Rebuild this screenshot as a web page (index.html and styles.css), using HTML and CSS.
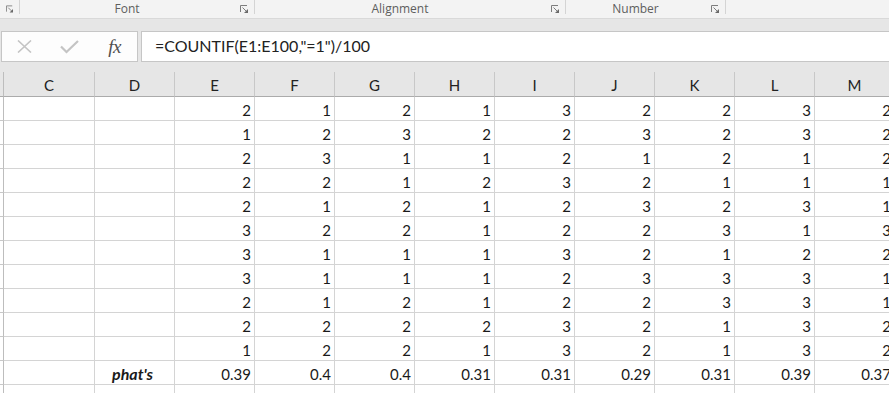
FILE: index.html
```html
<!DOCTYPE html>
<html>
<head>
<meta charset="utf-8">
<link rel="stylesheet" href="styles.css">
</head>
<body>
<div class="ribbon">
  <div class="grp grp0"><span class="glabel"></span><svg class="launch" width="8" height="8" viewBox="0 0 8 8"><path d="M0.5 7V0.5H7" stroke="#7d7d7d" fill="none"/><path d="M2.5 2.5L6 6" stroke="#7d7d7d"/><path d="M8 4V8H4Z" fill="#6a6a6a"/></svg><span class="sep"></span></div>
  <div class="grp g-font"><span class="glabel">Font</span><svg class="launch" width="8" height="8" viewBox="0 0 8 8"><path d="M0.5 7V0.5H7" stroke="#7d7d7d" fill="none"/><path d="M2.5 2.5L6 6" stroke="#7d7d7d"/><path d="M8 4V8H4Z" fill="#6a6a6a"/></svg><span class="sep"></span></div>
  <div class="grp g-align"><span class="glabel">Alignment</span><svg class="launch" width="8" height="8" viewBox="0 0 8 8"><path d="M0.5 7V0.5H7" stroke="#7d7d7d" fill="none"/><path d="M2.5 2.5L6 6" stroke="#7d7d7d"/><path d="M8 4V8H4Z" fill="#6a6a6a"/></svg><span class="sep"></span></div>
  <div class="grp g-num"><span class="glabel">Number</span><svg class="launch" width="8" height="8" viewBox="0 0 8 8"><path d="M0.5 7V0.5H7" stroke="#7d7d7d" fill="none"/><path d="M2.5 2.5L6 6" stroke="#7d7d7d"/><path d="M8 4V8H4Z" fill="#6a6a6a"/></svg><span class="sep"></span></div>
</div>
<div class="band"></div>
<div class="fbar">
  <div class="fxbox">
    <span class="ico"><svg width="15" height="13" viewBox="0 0 15 13"><path d="M1 0.5L14 12.5M14 0.5L1 12.5" stroke="#c4c4c4" stroke-width="1.6" fill="none"/></svg></span>
    <span class="ico"><svg width="19" height="14" viewBox="0 0 19 14"><path d="M1 6.5L6.5 12L18 1" stroke="#c4c4c4" stroke-width="2.2" fill="none"/></svg></span>
    <span class="ico fx">fx</span>
  </div>
  <div class="formula">=COUNTIF(E1:E100,"=1")/100</div>
</div>
<div class="gap"></div>
<div class="sheet">
  <div class="hd rh"></div><div class="hd">C</div><div class="hd">D</div><div class="hd">E</div><div class="hd">F</div><div class="hd">G</div><div class="hd">H</div><div class="hd">I</div><div class="hd">J</div><div class="hd">K</div><div class="hd">L</div><div class="hd">M</div>

  <div class="c rh"></div><div class="c"></div><div class="c"></div><div class="c">2</div><div class="c">1</div><div class="c">2</div><div class="c">1</div><div class="c">3</div><div class="c">2</div><div class="c">2</div><div class="c">3</div><div class="c">2</div>
  <div class="c rh"></div><div class="c"></div><div class="c"></div><div class="c">1</div><div class="c">2</div><div class="c">3</div><div class="c">2</div><div class="c">2</div><div class="c">3</div><div class="c">2</div><div class="c">3</div><div class="c">2</div>
  <div class="c rh"></div><div class="c"></div><div class="c"></div><div class="c">2</div><div class="c">3</div><div class="c">1</div><div class="c">1</div><div class="c">2</div><div class="c">1</div><div class="c">2</div><div class="c">1</div><div class="c">2</div>
  <div class="c rh"></div><div class="c"></div><div class="c"></div><div class="c">2</div><div class="c">2</div><div class="c">1</div><div class="c">2</div><div class="c">3</div><div class="c">2</div><div class="c">1</div><div class="c">1</div><div class="c">1</div>
  <div class="c rh"></div><div class="c"></div><div class="c"></div><div class="c">2</div><div class="c">1</div><div class="c">2</div><div class="c">1</div><div class="c">2</div><div class="c">3</div><div class="c">2</div><div class="c">3</div><div class="c">1</div>
  <div class="c rh"></div><div class="c"></div><div class="c"></div><div class="c">3</div><div class="c">2</div><div class="c">2</div><div class="c">1</div><div class="c">2</div><div class="c">2</div><div class="c">3</div><div class="c">1</div><div class="c">3</div>
  <div class="c rh"></div><div class="c"></div><div class="c"></div><div class="c">3</div><div class="c">1</div><div class="c">1</div><div class="c">1</div><div class="c">3</div><div class="c">2</div><div class="c">1</div><div class="c">2</div><div class="c">2</div>
  <div class="c rh"></div><div class="c"></div><div class="c"></div><div class="c">3</div><div class="c">1</div><div class="c">1</div><div class="c">1</div><div class="c">2</div><div class="c">3</div><div class="c">3</div><div class="c">3</div><div class="c">1</div>
  <div class="c rh"></div><div class="c"></div><div class="c"></div><div class="c">2</div><div class="c">1</div><div class="c">2</div><div class="c">1</div><div class="c">2</div><div class="c">2</div><div class="c">3</div><div class="c">3</div><div class="c">1</div>
  <div class="c rh"></div><div class="c"></div><div class="c"></div><div class="c">2</div><div class="c">2</div><div class="c">2</div><div class="c">2</div><div class="c">3</div><div class="c">2</div><div class="c">1</div><div class="c">3</div><div class="c">2</div>
  <div class="c rh"></div><div class="c"></div><div class="c"></div><div class="c">1</div><div class="c">2</div><div class="c">2</div><div class="c">1</div><div class="c">3</div><div class="c">2</div><div class="c">1</div><div class="c">3</div><div class="c">2</div>
  <div class="c rh"></div><div class="c"></div><div class="c lbl">phat's</div><div class="c">0.39</div><div class="c">0.4</div><div class="c">0.4</div><div class="c">0.31</div><div class="c">0.31</div><div class="c">0.29</div><div class="c">0.31</div><div class="c">0.39</div><div class="c">0.37</div>
  <div class="c rh"></div><div class="c"></div><div class="c"></div><div class="c"></div><div class="c"></div><div class="c"></div><div class="c"></div><div class="c"></div><div class="c"></div><div class="c"></div><div class="c"></div><div class="c"></div>
</div>
</body>
</html>
```

FILE: styles.css
```css
* { box-sizing: border-box; }
html, body {
  margin: 0;
  padding: 0;
  width: 889px;
  height: 393px;
  overflow: hidden;
  background: #e6e6e6;
}
body {
  font-family: "Lato", "Liberation Sans", sans-serif;
}

/* ribbon group labels */
.ribbon {
  display: flex;
  height: 19px;
  background: #f3f3f3;
  border-bottom: 1px solid #d9d9d9;
  font-family: "Open Sans", "Noto Sans", sans-serif;
  font-size: 12px;
  color: #5e5e5e;
}
.grp {
  display: flex;
  align-items: flex-start;
  height: 18px;
}
.grp0 { width: 20px; }
.g-font { width: 235px; }
.g-align { width: 311px; }
.g-num { width: 160px; }
.glabel {
  flex: 1;
  text-align: center;
  line-height: 17px;
  padding-right: 6px;
}
.launch {
  display: block;
  margin-top: 5px;
  margin-right: 6px;
}
.sep {
  display: block;
  width: 1px;
  height: 14px;
  background: #d4d4d4;
}

.band {
  height: 12px;
  background: #e6e6e6;
}

/* formula bar */
.fbar {
  display: flex;
  gap: 3px;
  height: 31px;
  padding-left: 1px;
}
.fxbox {
  width: 137px;
  height: 31px;
  background: #fdfdfd;
  border: 1px solid #c6c6c6;
  display: flex;
  align-items: center;
}
.ico {
  width: 45px;
  display: flex;
  justify-content: center;
  align-items: center;
}
.ico svg { display: block; }
.fx {
  font-family: "Liberation Serif", serif;
  font-style: italic;
  font-size: 19px;
  color: #505050;
  letter-spacing: -0.5px;
}
.formula {
  flex: 1;
  height: 31px;
  background: #fff;
  border-top: 1px solid #c6c6c6;
  border-bottom: 1px solid #c6c6c6;
  border-left: 1px solid #c6c6c6;
  padding-left: 13px;
  font-size: 16px;
  line-height: 28px;
  color: #222;
  white-space: nowrap;
}

.gap { height: 10px; }

/* grid */
.sheet {
  display: grid;
  grid-template-columns: 4px 91px repeat(10, 80px);
  grid-template-rows: 25px repeat(12, 24px) 24px;
  background: #fff;
  font-size: 15px;
  color: #1a1a1a;
}
.hd {
  background: #e6e6e6;
  border-right: 1px solid #c8c8c8;
  border-bottom: 1px solid #ababab;
  text-align: center;
  padding-top: 3px;
  line-height: 20px;
  color: #222;
}
.hd.rh { border-right-color: #bdbdbd; }
.c {
  border-right: 1px solid #d4d4d4;
  border-bottom: 1px solid #d4d4d4;
  text-align: right;
  padding-right: 3px;
  padding-top: 3px;
  line-height: 20px;
  white-space: nowrap;
  overflow: hidden;
}
.c.rh {
  border-right-color: #bdbdbd;
  border-bottom-color: #c8c8c8;
  padding: 0;
}
.c.lbl {
  text-align: center;
  font-size: 16px;
  font-weight: bold;
  font-style: italic;
  padding-right: 0;
  padding-left: 0;
  text-indent: -4px;
}
```
